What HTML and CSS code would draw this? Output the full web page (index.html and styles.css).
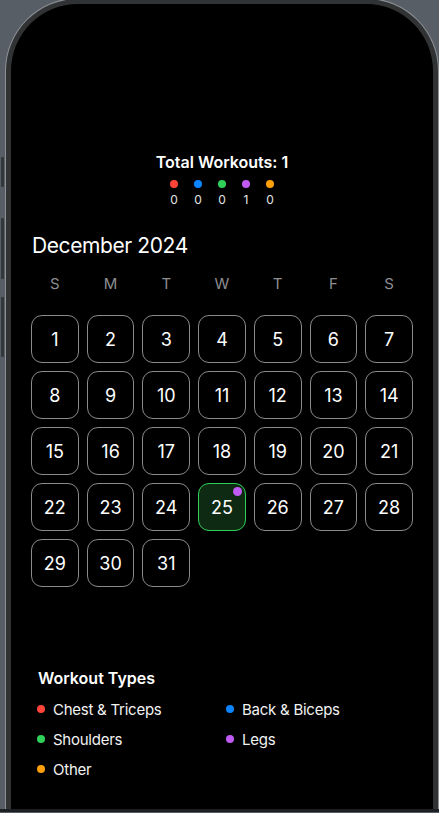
FILE: index.html
```html
<!DOCTYPE html>
<html>
<head>
<meta charset="utf-8">
<link rel="stylesheet" href="styles.css">
</head>
<body>
<div class="device">
  <span class="side-btn b1"></span>
  <span class="side-btn b2"></span>
  <span class="side-btn b3"></span>
  <div class="phone">
    <section class="summary">
      <h2 class="total">Total Workouts: 1</h2>
      <div class="counts">
        <div class="count"><span class="dot red"></span><span class="num">0</span></div>
        <div class="count"><span class="dot blue"></span><span class="num">0</span></div>
        <div class="count"><span class="dot green"></span><span class="num">0</span></div>
        <div class="count"><span class="dot purple"></span><span class="num">1</span></div>
        <div class="count"><span class="dot orange"></span><span class="num">0</span></div>
      </div>
    </section>
    <section class="calendar">
      <h1 class="month">December 2024</h1>
      <div class="weekdays">
        <span>S</span><span>M</span><span>T</span><span>W</span><span>T</span><span>F</span><span>S</span>
      </div>
      <div class="grid">
        <div class="day">1</div><div class="day">2</div><div class="day">3</div><div class="day">4</div><div class="day">5</div><div class="day">6</div><div class="day">7</div>
        <div class="day">8</div><div class="day">9</div><div class="day">10</div><div class="day">11</div><div class="day">12</div><div class="day">13</div><div class="day">14</div>
        <div class="day">15</div><div class="day">16</div><div class="day">17</div><div class="day">18</div><div class="day">19</div><div class="day">20</div><div class="day">21</div>
        <div class="day">22</div><div class="day">23</div><div class="day">24</div><div class="day today">25<span class="badge"></span></div><div class="day">26</div><div class="day">27</div><div class="day">28</div>
        <div class="day">29</div><div class="day">30</div><div class="day">31</div>
      </div>
    </section>
    <section class="legend">
      <h3 class="legend-title">Workout Types</h3>
      <div class="legend-grid">
        <div class="item"><span class="dot red"></span>Chest &amp; Triceps</div>
        <div class="item"><span class="dot blue"></span>Back &amp; Biceps</div>
        <div class="item"><span class="dot green"></span>Shoulders</div>
        <div class="item"><span class="dot purple"></span>Legs</div>
        <div class="item"><span class="dot orange"></span>Other</div>
      </div>
    </section>
  </div>
  <div class="bottom-strip"></div>
</div>
</body>
</html>
```
FILE: styles.css
```css
* { box-sizing: border-box; }
html, body {
  margin: 0;
  padding: 0;
  background: #575e66;
  font-family: Inter, "Noto Sans", "Liberation Sans", sans-serif;
  color: #fff;
  overflow: hidden;
}
.device {
  position: relative;
  width: 439px;
  height: 813px;
}
.side-btn {
  position: absolute;
  left: 1px;
  width: 3px;
  background: #35383b;
  border-radius: 1px;
}
.b1 { top: 158px; height: 30px; }
.b2 { top: 219px; height: 61px; }
.b3 { top: 298px; height: 60px; }
.phone {
  margin: -1px 0 0 6px;
  width: 432px;
  height: 812px;
  background: #000;
  border: 5px solid #313233;
  border-bottom: none;
  border-radius: 72px 72px 0 0;
  box-shadow: 0 0 0 1px #8d9196;
  padding-top: 148px;
}
.bottom-strip {
  position: absolute;
  left: 0;
  right: 0;
  bottom: 0;
  height: 3px;
  background: #1d2023;
}
.summary {
  display: flex;
  flex-direction: column;
  align-items: center;
}
.total {
  margin: 0;
  font-size: 16px;
  line-height: 20px;
  font-weight: 600;
}
.counts {
  display: flex;
  gap: 16px;
  margin-top: 8px;
}
.count {
  width: 8px;
  display: flex;
  flex-direction: column;
  align-items: center;
  gap: 4px;
}
.dot {
  display: inline-block;
  width: 8px;
  height: 8px;
  border-radius: 50%;
  flex: none;
}
.red { background: #ff453a; }
.blue { background: #0a84ff; }
.green { background: #30d158; }
.purple { background: #bf5af2; }
.orange { background: #ff9f0a; }
.num {
  font-size: 12px;
  line-height: 15px;
  color: #e6e6e6;
}
.calendar {
  padding: 0 0 0 20px;
  margin-top: 25px;
}
.month {
  margin: 0 0 0 1px;
  font-size: 21px;
  line-height: 28px;
  letter-spacing: -0.4px;
  font-weight: 400;
}
.weekdays {
  width: 382px;
  display: grid;
  grid-template-columns: repeat(7, 1fr);
  gap: 8px;
  margin-top: 14px;
  font-size: 15px;
  line-height: 20px;
  color: #8e8e93;
  text-align: center;
}
.grid {
  width: 382px;
  display: grid;
  grid-template-columns: repeat(7, 1fr);
  gap: 8px;
  margin-top: 21px;
}
.day {
  position: relative;
  height: 48px;
  border: 1px solid #8a8a8e;
  border-radius: 11px;
  display: flex;
  align-items: center;
  justify-content: center;
  font-size: 18px;
}
.day.today {
  background: #0e2a12;
  border-color: #30d158;
}
.badge {
  position: absolute;
  top: 3px;
  right: 3px;
  width: 9px;
  height: 9px;
  border-radius: 50%;
  background: #bf5af2;
}
.legend {
  margin-top: 81px;
  padding-left: 26px;
}
.legend-title {
  margin: 0 0 0 1px;
  font-size: 16px;
  line-height: 20px;
  font-weight: 600;
}
.legend-grid {
  margin-top: 6px;
  display: grid;
  grid-template-columns: 189px 189px;
}
.item {
  height: 30px;
  display: flex;
  align-items: center;
  gap: 8px;
  font-size: 15px;
  letter-spacing: -0.25px;
  color: #f2f2f2;
}
```
